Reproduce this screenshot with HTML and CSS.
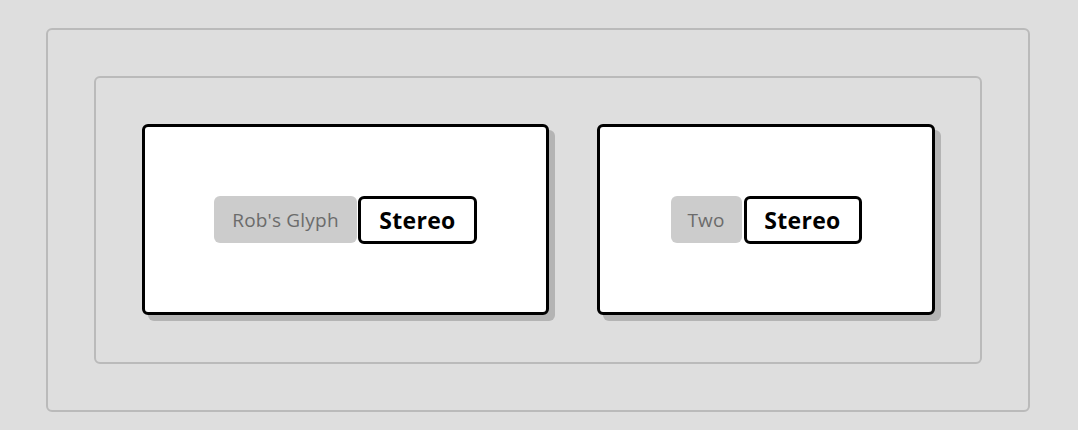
FILE: index.html
```html
<!DOCTYPE html>
<html>
<head>
<meta charset="utf-8">
<link rel="stylesheet" href="styles.css">
</head>
<body>
  <div class="outer">
    <div class="inner">
      <div class="card card-wide">
        <span class="tag tag-long">Rob's Glyph</span><span class="mode">Stereo</span>
      </div>
      <div class="card card-narrow">
        <span class="tag tag-short">Two</span><span class="mode">Stereo</span>
      </div>
    </div>
  </div>
</body>
</html>
```
FILE: styles.css
```css
html, body {
  margin: 0;
  background: #dedede;
}
body {
  padding: 28px 48px 18px 46px;
  font-family: "Open Sans", "DejaVu Sans", sans-serif;
}
.outer {
  border: 2px solid #bababa;
  border-radius: 6px;
  padding: 46px;
}
.inner {
  border: 2px solid #bababa;
  border-radius: 6px;
  padding: 46px 44px 47px 46px;
  display: flex;
  gap: 48px;
}
.card {
  box-sizing: border-box;
  height: 191px;
  background: #fff;
  border: 3px solid #000;
  border-radius: 6px;
  box-shadow: 6px 6px 0 #b4b4b4;
  display: flex;
  align-items: center;
  justify-content: center;
  gap: 1px;
}
.card-wide { width: 407px; }
.card-narrow { width: 338px; gap: 2px; }
.tag {
  box-sizing: border-box;
  height: 47px;
  display: flex;
  align-items: center;
  justify-content: center;
  background: #cccccc;
  color: #6b6b6b;
  font-size: 19px;
  letter-spacing: 0.2px;
  border-radius: 6px;
}
.tag-long { width: 143px; }
.tag-short { width: 71px; }
.mode {
  box-sizing: border-box;
  width: 119px;
  height: 48px;
  display: flex;
  align-items: center;
  justify-content: center;
  border: 3px solid #000;
  border-radius: 6px;
  background: #fff;
  color: #000;
  font-weight: 700;
  font-size: 23px;
  letter-spacing: 0.3px;
}
.card-narrow .mode { width: 118px; }
```
